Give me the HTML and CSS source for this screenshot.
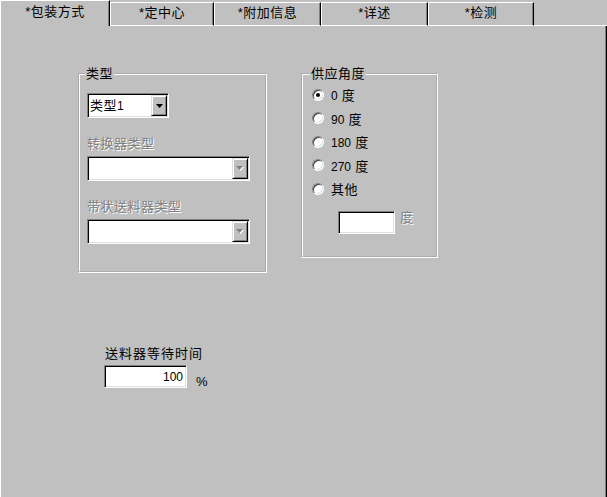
FILE: index.html
```html
<!DOCTYPE html>
<html lang="zh">
  <head>
    <meta charset="UTF-8" />
    <meta name="viewport" content="width=device-width, initial-scale=1.0" />
    <title>包装方式</title>
    <link rel="stylesheet" href="styles.css">
  </head>
  <body>
    <div class="tabctl">
      <div class="tabs">
        <div class="tab active">*包装方式</div>
        <div class="tab">*定中心</div>
        <div class="tab">*附加信息</div>
        <div class="tab">*详述</div>
        <div class="tab">*检测</div>
        <div class="tab-fill"></div>
      </div>

      <div class="pane">
        <div class="groups">
          <fieldset class="group group-type">
            <legend>类型</legend>
            <div class="combo combo-short">
              <span class="combo-value">类型<span class="num">1</span></span>
              <span class="combo-btn">
                <svg width="7" height="4" viewBox="0 0 7 4"><path d="M0 0h7L3.5 4z" fill="#000"/></svg>
              </span>
            </div>

            <div class="label-off">转换器类型</div>
            <div class="combo combo-long">
              <span class="combo-value"></span>
              <span class="combo-btn">
                <svg width="8" height="5" viewBox="0 0 8 5"><path d="M1 1h7L4.5 5z" fill="#fff"/><path d="M0 0h7L3.5 4z" fill="#808080"/></svg>
              </span>
            </div>

            <div class="label-off">带状送料器类型</div>
            <div class="combo combo-long">
              <span class="combo-value"></span>
              <span class="combo-btn">
                <svg width="8" height="5" viewBox="0 0 8 5"><path d="M1 1h7L4.5 5z" fill="#fff"/><path d="M0 0h7L3.5 4z" fill="#808080"/></svg>
              </span>
            </div>
          </fieldset>

          <fieldset class="group group-angle">
            <legend>供应角度</legend>
            <div class="radios">
              <div class="radio-row"><span class="radio checked"></span><span><span class="num">0</span> 度</span></div>
              <div class="radio-row"><span class="radio"></span><span><span class="num">90</span> 度</span></div>
              <div class="radio-row"><span class="radio"></span><span><span class="num">180</span> 度</span></div>
              <div class="radio-row"><span class="radio"></span><span><span class="num">270</span> 度</span></div>
              <div class="radio-row"><span class="radio"></span><span>其他</span></div>
            </div>
            <div class="other-row">
              <input type="text" class="field field-other" value="" />
              <span class="unit-off">度</span>
            </div>
          </fieldset>
        </div>

        <div class="wait">
          <div class="wait-label">送料器等待时间</div>
          <div class="wait-row">
            <input type="text" class="field field-wait" value="100" />
            <span class="unit">%</span>
          </div>
        </div>
      </div>
    </div>
  </body>
</html>
```

FILE: styles.css
```css
body {
  margin: 0;
  background-color: #c0c0c0;
  font-family: "Liberation Sans", "Noto Sans CJK SC", sans-serif;
  font-size: 13px;
  letter-spacing: 0.5px;
  color: #000;
  overflow: hidden;
}
.tabctl {
  display: flex;
  flex-direction: column;
  height: 100vh;
}
.num {
  font-size: 12px;
  letter-spacing: 0;
}

/* tab strip */
.tabs {
  display: grid;
  grid-template-columns: 110px 104px 107px 107px 106px 1fr;
  align-items: end;
  height: 26px;
}
.tab {
  box-sizing: border-box;
  height: 24px;
  border-top: 1px solid #fff;
  border-left: 1px solid #fff;
  border-right: 1px solid #000;
  border-bottom: 1px solid #fff;
  box-shadow: inset -1px 0 #808080;
  text-align: center;
  line-height: 20px;
  padding-bottom: 2px;
  white-space: nowrap;
}
.tab.active {
  height: 26px;
  border-bottom: none;
  line-height: 22px;
  padding-bottom: 4px;
}
.tab-fill {
  height: 1px;
  background-color: #fff;
}

/* panel */
.pane {
  flex: 1;
  border-left: 1px solid #fff;
  border-right: 1px solid #000;
  box-shadow: inset -1px 0 #808080;
  padding: 41px 0 0 77px;
}
.groups {
  display: flex;
  align-items: flex-start;
  gap: 34px;
}
.group {
  box-sizing: border-box;
  margin: 0;
  min-width: 0;
  border: 2px groove #fff;
}
.group legend {
  padding: 0 1px;
  margin-left: -2px;
  line-height: 14px;
}
.group-type {
  width: 189px;
  padding: 12px 0 27px 7px;
}
.group-angle {
  width: 137px;
  padding: 2px 0 22px 9px;
}

/* combo boxes */
.combo {
  box-sizing: border-box;
  display: flex;
  height: 25px;
  padding: 1px;
  border: 1px solid;
  border-color: #808080 #fff #fff #808080;
  box-shadow: inset 1px 1px #000, inset -1px -1px #dfdfdf;
  background-color: #fff;
}
.combo-short {
  width: 82px;
}
.combo-long {
  width: 163px;
}
.combo-value {
  flex: 1;
  padding-left: 1px;
  line-height: 21px;
}
.combo-btn {
  box-sizing: border-box;
  width: 16px;
  height: 21px;
  display: flex;
  align-items: center;
  justify-content: center;
  background-color: #c0c0c0;
  border: 1px solid;
  border-color: #dfdfdf #000 #000 #dfdfdf;
  box-shadow: inset 1px 1px #fff, inset -1px -1px #808080;
}
.label-off {
  margin: 18px 0 4px;
  line-height: 16px;
  color: #808080;
  text-shadow: 1px 1px #fff;
}

/* radios */
.radios {
  display: flex;
  flex-direction: column;
}
.radio-row {
  display: flex;
  align-items: center;
  gap: 7px;
  height: 23.5px;
}
.radio {
  box-sizing: border-box;
  width: 12px;
  height: 12px;
  display: grid;
  place-items: center;
  border-radius: 50%;
  border: 1px solid;
  border-color: #808080 #fff #fff #808080;
  box-shadow: inset 1px 1px #404040, inset -1px -1px #dfdfdf;
  background-color: #fff;
}
.radio.checked::after {
  content: "";
  width: 4px;
  height: 4px;
  border-radius: 50%;
  background-color: #000;
}
.other-row {
  display: flex;
  align-items: flex-start;
  gap: 5px;
  margin: 10px 0 0 26px;
}
.unit-off {
  line-height: 14px;
  color: #808080;
  text-shadow: 1px 1px #fff;
}

/* text fields */
.field {
  box-sizing: border-box;
  height: 23px;
  margin: 0;
  padding: 0 3px;
  border: 1px solid;
  border-color: #808080 #fff #fff #808080;
  box-shadow: inset 1px 1px #000, inset -1px -1px #dfdfdf;
  background-color: #fff;
  font: inherit;
  color: #000;
  outline: none;
}
.field-other {
  width: 57px;
}
.field-wait {
  width: 83px;
  font-size: 12px;
  letter-spacing: 0;
  text-align: right;
}

/* feeder wait */
.wait {
  margin: 73px 0 0 26px;
}
.wait-label {
  margin-left: 1px;
  margin-bottom: 3px;
  line-height: 16px;
  letter-spacing: 1px;
}
.wait-row {
  display: flex;
  gap: 9px;
}
.unit {
  align-self: flex-end;
  line-height: 12px;
}
```
